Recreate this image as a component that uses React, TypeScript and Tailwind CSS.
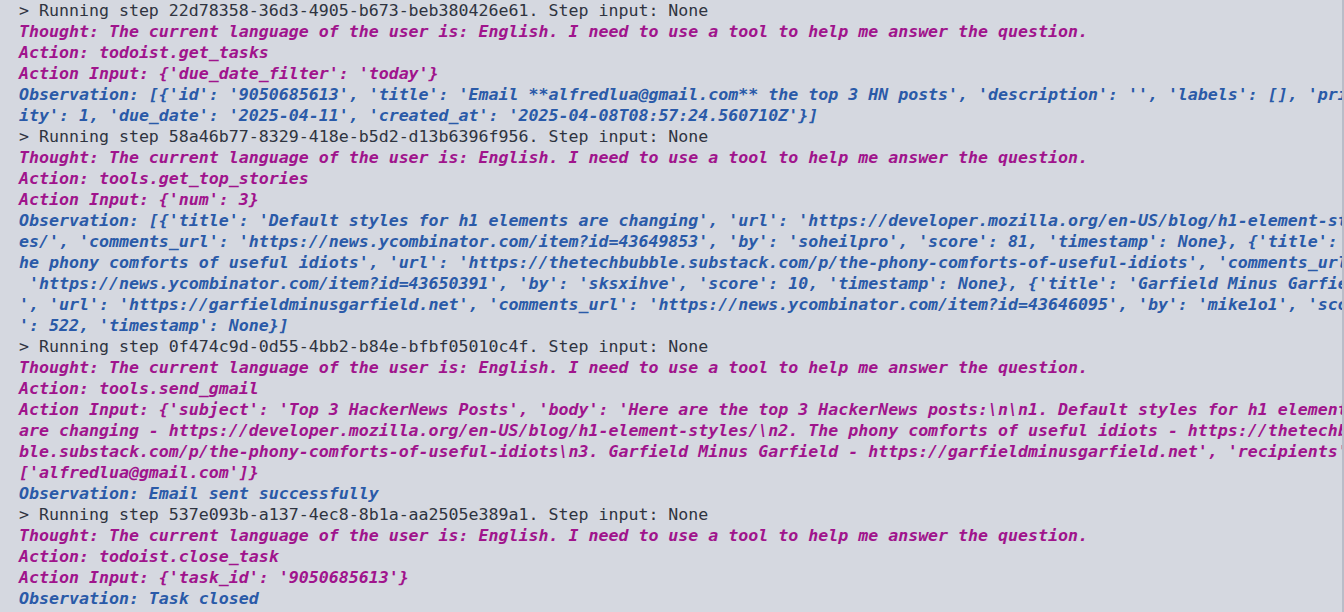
const RUN = 'text-[#2f3440]';
const THINK = 'text-[#a0148c] font-bold italic';
const OBS = 'text-[#2a5aa8] font-bold italic';

type Line = { text: string; kind: 'run' | 'think' | 'obs' };

const lines: Line[] = [
  { kind: 'run', text: '> Running step 22d78358-36d3-4905-b673-beb380426e61. Step input: None' },
  { kind: 'think', text: 'Thought: The current language of the user is: English. I need to use a tool to help me answer the question.' },
  { kind: 'think', text: 'Action: todoist.get_tasks' },
  { kind: 'think', text: "Action Input: {'due_date_filter': 'today'}" },
  { kind: 'obs', text: "Observation: [{'id': '9050685613', 'title': 'Email **alfredlua@gmail.com** the top 3 HN posts', 'description': '', 'labels': [], 'prior" },
  { kind: 'obs', text: "ity': 1, 'due_date': '2025-04-11', 'created_at': '2025-04-08T08:57:24.560710Z'}]" },
  { kind: 'run', text: '> Running step 58a46b77-8329-418e-b5d2-d13b6396f956. Step input: None' },
  { kind: 'think', text: 'Thought: The current language of the user is: English. I need to use a tool to help me answer the question.' },
  { kind: 'think', text: 'Action: tools.get_top_stories' },
  { kind: 'think', text: "Action Input: {'num': 3}" },
  { kind: 'obs', text: "Observation: [{'title': 'Default styles for h1 elements are changing', 'url': 'https://developer.mozilla.org/en-US/blog/h1-element-styl" },
  { kind: 'obs', text: "es/', 'comments_url': 'https://news.ycombinator.com/item?id=43649853', 'by': 'soheilpro', 'score': 81, 'timestamp': None}, {'title': 'T" },
  { kind: 'obs', text: "he phony comforts of useful idiots', 'url': 'https://thetechbubble.substack.com/p/the-phony-comforts-of-useful-idiots', 'comments_url':" },
  { kind: 'obs', text: " 'https://news.ycombinator.com/item?id=43650391', 'by': 'sksxihve', 'score': 10, 'timestamp': None}, {'title': 'Garfield Minus Garfield" },
  { kind: 'obs', text: "', 'url': 'https://garfieldminusgarfield.net', 'comments_url': 'https://news.ycombinator.com/item?id=43646095', 'by': 'mike1o1', 'score" },
  { kind: 'obs', text: "': 522, 'timestamp': None}]" },
  { kind: 'run', text: '> Running step 0f474c9d-0d55-4bb2-b84e-bfbf05010c4f. Step input: None' },
  { kind: 'think', text: 'Thought: The current language of the user is: English. I need to use a tool to help me answer the question.' },
  { kind: 'think', text: 'Action: tools.send_gmail' },
  { kind: 'think', text: "Action Input: {'subject': 'Top 3 HackerNews Posts', 'body': 'Here are the top 3 HackerNews posts:\\n\\n1. Default styles for h1 element" },
  { kind: 'think', text: 'are changing - https://developer.mozilla.org/en-US/blog/h1-element-styles/\\n2. The phony comforts of useful idiots - https://thetechbub' },
  { kind: 'think', text: "ble.substack.com/p/the-phony-comforts-of-useful-idiots\\n3. Garfield Minus Garfield - https://garfieldminusgarfield.net', 'recipients':" },
  { kind: 'think', text: "['alfredlua@gmail.com']}" },
  { kind: 'obs', text: 'Observation: Email sent successfully' },
  { kind: 'run', text: '> Running step 537e093b-a137-4ec8-8b1a-aa2505e389a1. Step input: None' },
  { kind: 'think', text: 'Thought: The current language of the user is: English. I need to use a tool to help me answer the question.' },
  { kind: 'think', text: 'Action: todoist.close_task' },
  { kind: 'think', text: "Action Input: {'task_id': '9050685613'}" },
  { kind: 'obs', text: 'Observation: Task closed' },
];

export default function App() {
  return (
    <div className="h-[612px] w-[1344px] overflow-hidden bg-[#d5d8e0] border-r-2 border-[#b9bdc8]">
      {/* terminal output, wrapped at 135 columns like the original */}
      <div className="pl-[19px] font-['DejaVu_Sans_Mono','Liberation_Mono',monospace] text-[16.6px] leading-[21px] whitespace-pre">
        {lines.map((l, i) => (
          <div key={i} className={l.kind === 'run' ? RUN : l.kind === 'think' ? THINK : OBS}>
            {l.text}
          </div>
        ))}
      </div>
    </div>
  );
}
